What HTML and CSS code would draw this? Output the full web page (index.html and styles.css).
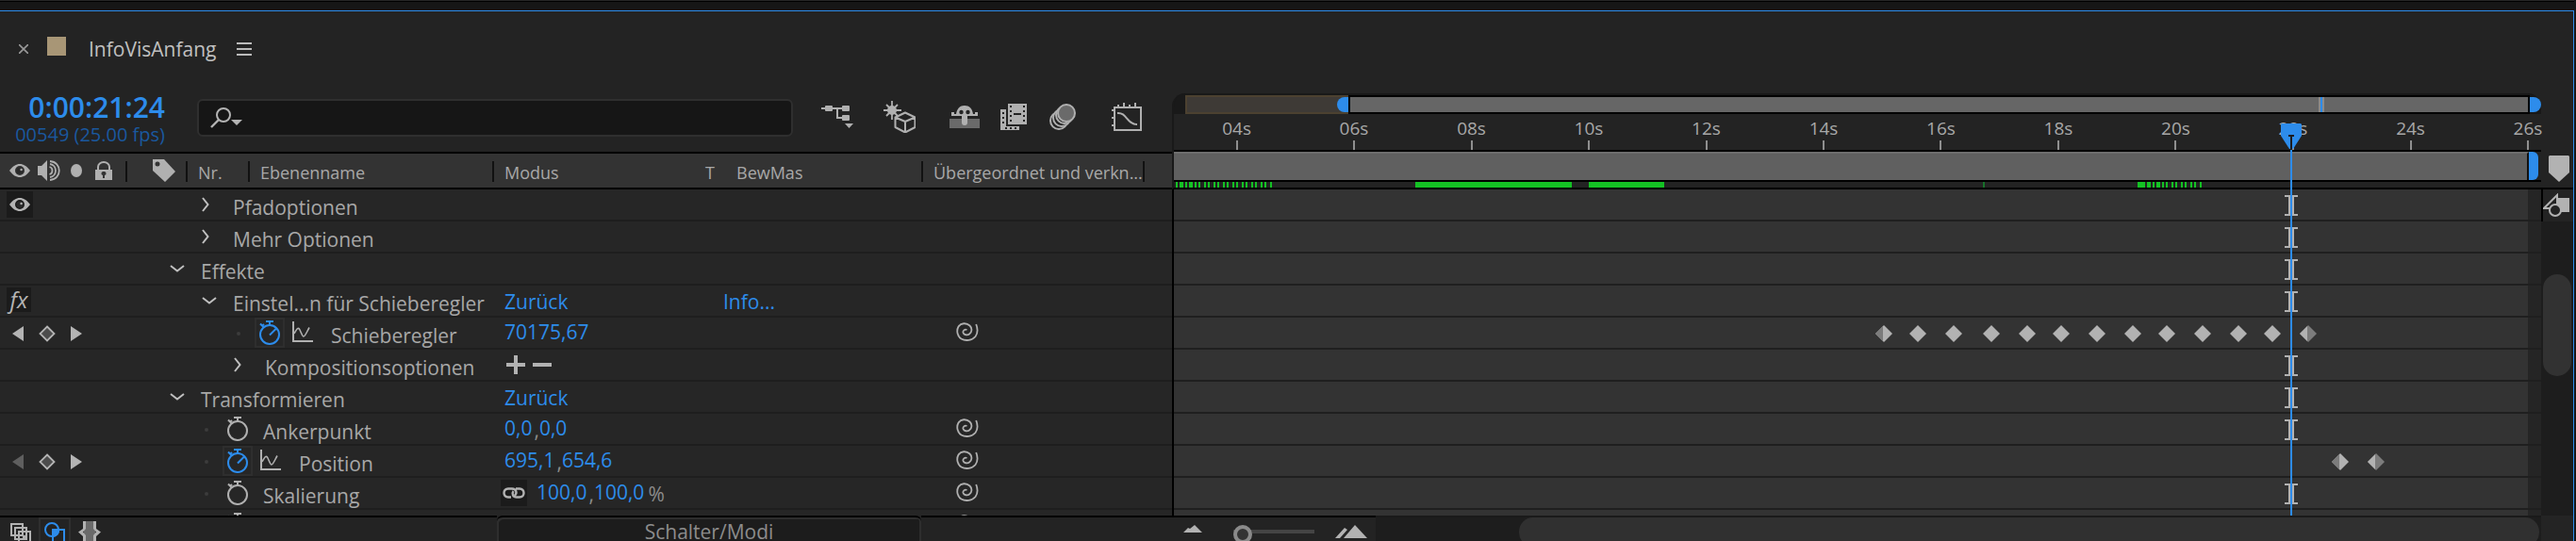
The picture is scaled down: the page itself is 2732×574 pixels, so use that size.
FILE: index.html
```html
<!DOCTYPE html>
<html lang="de">
<head>
<meta charset="utf-8">
<title>InfoVisAnfang</title>
<link rel="stylesheet" href="styles.css">
</head>
<body>
<svg class="defs" aria-hidden="true">
  <symbol id="eye" viewBox="0 0 22 14"><path fill="currentColor" fill-rule="evenodd" d="M0 7C4 2 7 0 11 0s7 2 11 7c-4 5-7 7-11 7S4 12 0 7zm11-5a5 5 0 1 0 0 10 5 5 0 0 0 0-10z"/><circle cx="11" cy="7" r="3.6" fill="#2a2a2a"/><circle cx="12.6" cy="6" r="1.2" fill="currentColor"/></symbol>
  <symbol id="right" viewBox="0 0 8 16"><path d="M1 1l5.5 7L1 15" fill="none" stroke="currentColor" stroke-width="2"/></symbol>
  <symbol id="down" viewBox="0 0 16 8"><path d="M1 1l7 5.5L15 1" fill="none" stroke="currentColor" stroke-width="2"/></symbol>
  <symbol id="watch" viewBox="0 0 22 26"><g fill="none" stroke="currentColor" stroke-width="2"><circle cx="11" cy="15" r="10"/><path d="M7 1h8M11 1v4M1 3.5l4 4M3 6l2-2"/></g></symbol>
  <symbol id="watch-on" viewBox="0 0 22 26"><g fill="none" stroke="currentColor" stroke-width="2"><circle cx="11" cy="15" r="10"/><path d="M7 1h8M11 1v4M1 3.5l4 4M3 6l2-2M11 15.5l7-7"/></g></symbol>
  <symbol id="curve" viewBox="0 0 22 22"><path d="M1 0v21h21" fill="none" stroke="currentColor" stroke-width="2"/><path d="M2 13C5 7 6.500 6 8 9s2.500 7 4 7 3-4 6-9.500" fill="none" stroke="currentColor" stroke-width="1.600"/></symbol>
  <symbol id="whip" viewBox="0 0 24 20"><path d="M11.500 8C9 7 7 9 7.500 11c.8 2.500 4.500 3 6.500 1.500 3-2 3.200-6.500.5-9C11 .2 5 .5 2.500 4.500 0 9 1.500 15 5.500 17.500 10 20 17 19.500 20.500 15c2.500-3.500 2.700-8 .7-13" fill="none" stroke="currentColor" stroke-width="1.800"/></symbol>
  <symbol id="prev" viewBox="0 0 12 16"><path d="M12 0v16L0 8z" fill="currentColor"/></symbol>
  <symbol id="next" viewBox="0 0 12 16"><path d="M0 0v16l12-8z" fill="currentColor"/></symbol>
  <symbol id="key" viewBox="0 0 18 18"><path d="M9 1.500L16.500 9 9 16.500 1.500 9z" fill="#4c4c4c" stroke="currentColor" stroke-width="1.800"/></symbol>
  <symbol id="kf" viewBox="0 0 18 18"><path d="M9 0l9 9-9 9-9-9z" fill="#b2b2b2"/></symbol>
  <symbol id="kf-first" viewBox="0 0 18 18"><path d="M9 0l9 9-9 9-9-9z" fill="#b2b2b2"/><path d="M8 1v16L0 9z" fill="#7c7c7c"/></symbol>
  <symbol id="kf-last" viewBox="0 0 18 18"><path d="M9 0l9 9-9 9-9-9z" fill="#7c7c7c"/><path d="M8 1v16L0 9z" fill="#b2b2b2"/></symbol>
  <symbol id="beam" viewBox="0 0 14 22"><path d="M0 0h14v2h-4v18h4v2H0v-2h4V2H0z" fill="#b2b2b2"/></symbol>
</svg>

<div class="strip"></div>
<main class="panel">
  <nav class="tabs">
    <button class="close" aria-label="Schließen"><svg width="10" height="10" viewBox="0 0 10 10"><path d="M0 0l10 10M10 0L0 10" stroke="#999" stroke-width="1.600"/></svg></button>
    <span class="swatch"></span>
    <span class="tab-name">InfoVisAnfang</span>
    <button class="menu" aria-label="Bedienfeldmenü"><svg width="16" height="14" viewBox="0 0 16 14"><path d="M0 1h16M0 7h16M0 13h16" stroke="#bbb" stroke-width="2"/></svg></button>
  </nav>

  <div class="main">
    <section class="layers">
      <div class="toolbar">
        <div class="clock"><button class="timecode">0:00:21:24</button><span class="frames">00549 (25.00 fps)</span></div>
        <label class="search" aria-label="Suchen">
          <svg width="34" height="24" viewBox="0 0 34 24"><circle cx="14" cy="9" r="7" fill="none" stroke="#b4b4b4" stroke-width="2"/><path d="M9 14l-8 8" stroke="#b4b4b4" stroke-width="2.400"/><path d="M22 14h12l-6 6z" fill="#b4b4b4"/></svg>
          <input type="text">
        </label>
        <div class="tools">
          <button aria-label="Miniatur-Flussdiagramm"><svg width="34" height="26" viewBox="0 0 34 26" fill="#b0b0b0"><path d="M0 3h30v2H0zM16 4h2v9h8v2H16z"/><rect x="4" y="1" width="8" height="6" rx="1"/><rect x="22" y="1" width="8" height="6" rx="1"/><rect x="22" y="11" width="8" height="6" rx="1"/><path d="M25 20h9l-4.500 5z"/></svg></button>
          <button aria-label="3D-Entwurf"><svg width="34" height="34" viewBox="0 0 34 34"><circle cx="9" cy="10" r="5" fill="#b0b0b0"/><path d="M9 0v20M0 10h19M3 4l12 12M15 4L3 16" stroke="#b0b0b0" stroke-width="1.800"/><path d="M12.500 17.500L23 12.500l10.500 5V28L23 33.500 12.500 28zM12.500 17.500L23 22l10.500-4.500M23 22v11" fill="#232323" stroke="#b0b0b0" stroke-width="2" stroke-linejoin="round"/></svg></button>
          <button aria-label="Ebenen ausblenden"><svg width="32" height="26" viewBox="0 0 32 26"><path fill="#6a6a6a" d="M0 15h32v10H0z"/><path fill="#b0b0b0" d="M2 12V8h3v2h2C8 4 11 1 16 1s8 3 9 9h2V8h3v4z"/><path fill="#b0b0b0" d="M13 10h6v9a3 3 0 0 1-6 0z"/><circle cx="12.500" cy="8" r="2.200" fill="#232323"/><circle cx="19.500" cy="8" r="2.200" fill="#232323"/></svg></button>
          <button aria-label="Frameüberblendung"><svg width="28" height="28" viewBox="0 0 28 28"><path fill="#b0b0b0" fill-rule="evenodd" d="M0 6h6v18h14v4H0zM8 0h20v22H8zm6 10v2h8v-2zM10 2v2h2V2zm0 5v2h2V7zm0 5v2h2v-2zm0 5v2h2v-2zM24 2v2h2V2zm0 5v2h2V7zm0 5v2h2v-2zm0 5v2h2v-2zM2 9v2h2V9zm0 5v2h2v-2zm0 5v2h2v-2zm3 6v2h2v-2zm5 0v2h2v-2zm5 0v2h2v-2z"/></svg></button>
          <button aria-label="Bewegungsunschärfe"><svg width="28" height="28" viewBox="0 0 28 28" fill="#232323" stroke="#b0b0b0" stroke-width="2"><circle cx="10" cy="18" r="9"/><circle cx="13" cy="15" r="9"/><circle cx="16" cy="12" r="9"/><circle cx="18" cy="10" r="9" fill="#6a6a6a"/></svg></button>
          <button aria-label="Diagrammeditor"><svg width="32" height="30" viewBox="0 0 32 30" fill="none" stroke="#b0b0b0" stroke-width="2"><path d="M3 5h28v24H3zM7 4V2M13 4V0M19 4V2M25 4V0M2 8H0M2 16H0M2 24H0M6 11c10-1 10 12 21 12"/></svg></button>
        </div>
      </div>

      <div class="row head">
        <div class="av">
          <svg class="h-eye" width="22" height="14"><use href="#eye"/></svg>
          <svg width="24" height="22" viewBox="0 0 24 22"><path d="M0 6h4l6-6v22l-6-6H0z" fill="#b0b0b0"/><path d="M12.500 7c4 1 4 7 0 8M13 4c8 1 8 13 0 14M13 1c13 1 13 19 0 20" fill="none" stroke="#b0b0b0" stroke-width="1.800"/></svg>
          <span class="solo"></span>
          <svg width="18" height="20" viewBox="0 0 18 20"><path d="M3 10V6a6 5 0 0 1 12 0v4" fill="none" stroke="#b0b0b0" stroke-width="2"/><path d="M0 9h18v11H0z" fill="#b0b0b0"/><path d="M9 11a2 2 0 0 1 1 4v3H8v-3a2 2 0 0 1 1-4z" fill="#333"/></svg>
        </div>
        <div class="tag"><svg width="24" height="24" viewBox="0 0 24 24"><path fill="#b0b0b0" fill-rule="evenodd" d="M0 0h12l12 13-11 11L0 12zm5 2.500a2.500 2.500 0 1 0 0 5 2.500 2.500 0 0 0 0-5z"/></svg></div>
        <div class="nr">Nr.</div>
        <div class="ename">Ebenenname</div>
        <div class="mode"><span class="m1">Modus</span><span class="m2">T</span><span>BewMas</span></div>
        <div class="parent">Übergeordnet und verkn...</div>
      </div>

      <div class="rows">
        <div class="row"><div class="av"><button class="box"><svg width="22" height="14"><use href="#eye"/></svg></button></div><div class="name l2"><button class="twirl"><svg width="8" height="16"><use href="#right"/></svg></button><span>Pfadoptionen</span></div></div>
        <div class="row"><div class="av"></div><div class="name l2"><button class="twirl"><svg width="8" height="16"><use href="#right"/></svg></button><span>Mehr Optionen</span></div></div>
        <div class="row"><div class="av"></div><div class="name l1"><button class="twirl"><svg width="16" height="8"><use href="#down"/></svg></button><span>Effekte</span></div></div>
        <div class="row"><div class="av"><button class="box fx">fx</button></div><div class="name l2"><button class="twirl"><svg width="16" height="8"><use href="#down"/></svg></button><span>Einstel...n für Schieberegler</span></div><div class="value"><button class="reset">Zurück</button><button class="info">Info...</button></div></div>
        <div class="row"><div class="av keys"><button><svg width="12" height="16"><use href="#prev"/></svg></button><button><svg width="18" height="18"><use href="#key"/></svg></button><button><svg width="12" height="16"><use href="#next"/></svg></button></div><div class="name l3"><i class="dot"></i><button class="watch on"><svg width="22" height="26"><use href="#watch-on"/></svg></button><button class="graph"><svg width="22" height="22"><use href="#curve"/></svg></button><span>Schieberegler</span></div><div class="value"><button>70175,67</button></div><button class="whip"><svg width="24" height="20"><use href="#whip"/></svg></button></div>
        <div class="row"><div class="av"></div><div class="name l3"><button class="twirl"><svg width="8" height="16"><use href="#right"/></svg></button><span>Kompositionsoptionen</span></div><div class="value plus"><button aria-label="Hinzufügen"><svg width="20" height="20" viewBox="0 0 20 20"><path d="M0 10h20M10 0v20" stroke="#b2b2b2" stroke-width="4"/></svg></button><button aria-label="Entfernen"><svg width="20" height="20" viewBox="0 0 20 20"><path d="M0 10h20" stroke="#b2b2b2" stroke-width="4"/></svg></button></div></div>
        <div class="row"><div class="av"></div><div class="name l1"><button class="twirl"><svg width="16" height="8"><use href="#down"/></svg></button><span>Transformieren</span></div><div class="value"><button class="reset">Zurück</button></div></div>
        <div class="row"><div class="av"></div><div class="name l2"><i class="dot"></i><button class="watch"><svg width="22" height="26"><use href="#watch"/></svg></button><span>Ankerpunkt</span></div><div class="value"><button>0,0</button><span class="sep">,</span><button>0,0</button></div><button class="whip"><svg width="24" height="20"><use href="#whip"/></svg></button></div>
        <div class="row"><div class="av keys"><button class="off"><svg width="12" height="16"><use href="#prev"/></svg></button><button><svg width="18" height="18"><use href="#key"/></svg></button><button><svg width="12" height="16"><use href="#next"/></svg></button></div><div class="name l2"><i class="dot"></i><button class="watch on"><svg width="22" height="26"><use href="#watch-on"/></svg></button><button class="graph"><svg width="22" height="22"><use href="#curve"/></svg></button><span>Position</span></div><div class="value"><button>695,1</button><span class="sep">,</span><button>654,6</button></div><button class="whip"><svg width="24" height="20"><use href="#whip"/></svg></button></div>
        <div class="row"><div class="av"></div><div class="name l2"><i class="dot"></i><button class="watch"><svg width="22" height="26"><use href="#watch"/></svg></button><span>Skalierung</span></div><div class="value linked"><button class="box" aria-label="Proportionen beibehalten"><svg width="24" height="12" viewBox="0 0 24 12" fill="none" stroke="#b2b2b2" stroke-width="2.400"><path d="M9 10.500H6C0 10.500 0 1.500 6 1.500h4c5 0 5.500 5 3 7M15 10.500h3c6 0 6-9 0-9h-4M11.500 4c-2 3-.5 6.500 3.500 6.500"/></svg></button><button>100,0</button><span class="sep">,</span><button>100,0</button><span class="pct">%</span></div><button class="whip"><svg width="24" height="20"><use href="#whip"/></svg></button></div>
        <div class="row"><div class="av"></div><div class="name l2"><i class="dot"></i><button class="watch"><svg width="22" height="26"><use href="#watch"/></svg></button></div><div class="value"></div><button class="whip"><svg width="24" height="20"><use href="#whip"/></svg></button></div>
      </div>
    </section>

    <section class="timeline">
      <div class="ruler">
        <div class="navigator"><span class="before"><i></i></span><span class="range"></span><i class="end"></i><i class="here" style="left:83.930%"></i></div>
        <div class="scale">
          <span class="tick" style="left:4.660%">04s</span>
          <span class="tick" style="left:13.240%">06s</span>
          <span class="tick" style="left:21.830%">08s</span>
          <span class="tick" style="left:30.410%">10s</span>
          <span class="tick" style="left:39%">12s</span>
          <span class="tick" style="left:47.590%">14s</span>
          <span class="tick" style="left:56.170%">16s</span>
          <span class="tick" style="left:64.760%">18s</span>
          <span class="tick" style="left:73.340%">20s</span>
          <span class="tick" style="left:81.930%">22s</span>
          <span class="tick" style="left:90.520%">24s</span>
          <span class="tick" style="left:99.100%">26s</span>
        </div>
        <div class="work"><span class="area"></span><i></i></div>
        <svg class="cache" viewBox="0 0 1450 6" preserveAspectRatio="none"><path fill="#14c224" d="M2 0h2v6h-2zM6 0h4v6h-4zM12 0h2v6h-2zM16 0h4v6h-4zM22 0h2v6h-2zM26 0h2v6h-2zM32 0h2v6h-2zM36 0h2v6h-2zM42 0h2v6h-2zM46 0h2v6h-2zM52 0h2v6h-2zM56 0h2v6h-2zM62 0h2v6h-2zM66 0h2v6h-2zM72 0h2v6h-2zM76 0h2v6h-2zM82 0h2v6h-2zM86 0h2v6h-2zM92 0h2v6h-2zM96 0h2v6h-2zM102 0h2v6h-2zM256 0h166v6h-166zM440 0h80v6h-80zM1022 0h8v6h-8zM1032 0h4v6h-4zM1038 0h2v6h-2zM1042 0h4v6h-4zM1048 0h2v6h-2zM1052 0h2v6h-2zM1058 0h2v6h-2zM1062 0h2v6h-2zM1068 0h2v6h-2zM1072 0h2v6h-2zM1078 0h2v6h-2zM1082 0h2v6h-2zM1088 0h2v6h-2z"/><path fill="#17702a" d="M858 0h2v6h-2z"/></svg>
      </div>
      <div class="tracks">
        <div class="track"><svg class="beam" style="left:81.720%"><use href="#beam"/></svg></div>
        <div class="track"><svg class="beam" style="left:81.720%"><use href="#beam"/></svg></div>
        <div class="track"><svg class="beam" style="left:81.720%"><use href="#beam"/></svg></div>
        <div class="track"><svg class="beam" style="left:81.720%"><use href="#beam"/></svg></div>
        <div class="track">
          <svg class="kf" style="left:51.930%"><use href="#kf-first"/></svg>
          <svg class="kf" style="left:54.410%"><use href="#kf"/></svg>
          <svg class="kf" style="left:57.030%"><use href="#kf"/></svg>
          <svg class="kf" style="left:59.790%"><use href="#kf"/></svg>
          <svg class="kf" style="left:62.410%"><use href="#kf"/></svg>
          <svg class="kf" style="left:64.900%"><use href="#kf"/></svg>
          <svg class="kf" style="left:67.520%"><use href="#kf"/></svg>
          <svg class="kf" style="left:70.140%"><use href="#kf"/></svg>
          <svg class="kf" style="left:72.620%"><use href="#kf"/></svg>
          <svg class="kf" style="left:75.240%"><use href="#kf"/></svg>
          <svg class="kf" style="left:77.860%"><use href="#kf"/></svg>
          <svg class="kf" style="left:80.340%"><use href="#kf"/></svg>
          <svg class="kf" style="left:82.970%"><use href="#kf-last"/></svg>
        </div>
        <div class="track"><svg class="beam" style="left:81.720%"><use href="#beam"/></svg></div>
        <div class="track"><svg class="beam" style="left:81.720%"><use href="#beam"/></svg></div>
        <div class="track"><svg class="beam" style="left:81.720%"><use href="#beam"/></svg></div>
        <div class="track">
          <svg class="kf" style="left:85.310%"><use href="#kf-first"/></svg>
          <svg class="kf" style="left:87.930%"><use href="#kf-last"/></svg>
        </div>
        <div class="track"><svg class="beam" style="left:81.720%"><use href="#beam"/></svg></div>
        <div class="track"></div>
      </div>
      <div class="overlay"><div class="playhead" style="left:81.720%"><svg width="22" height="28" viewBox="0 0 22 28"><path d="M1 0h20l1 1v12L13 27H9L0 13V1z" fill="#2d8ceb"/><path d="M8 13h6M11 13v15" stroke="#1c1c1c" stroke-width="2"/></svg></div></div>
    </section>

    <aside class="rail">
      <button class="marker" aria-label="Marke"><svg width="22" height="28" viewBox="0 0 22 28"><path d="M1 0h20l1 1v17L11 28 0 18V1z" fill="#b2b2b2"/></svg></button>
      <button class="comp" aria-label="Kompositionsfamilie"><svg width="28" height="26" viewBox="0 0 28 26"><path d="M14 5h14v15H14z" fill="#b2b2b2"/><path d="M15 2L1 16h14z" fill="#232323" stroke="#b2b2b2" stroke-width="2"/><circle cx="13" cy="18" r="6" fill="#232323" stroke="#b2b2b2" stroke-width="2"/></svg></button>
      <div class="vscroll"><i></i></div>
    </aside>
  </div>

  <footer class="foot">
    <div class="switches">
      <button aria-label="Ebenenschalter"><svg width="22" height="22" viewBox="0 0 22 22" fill="#232323" stroke="#b2b2b2" stroke-width="2"><path d="M1 1h12v12H1zM5 5h12v12H5zM9 9h12v12H9z"/><circle cx="15" cy="15" r="1.200" fill="#b2b2b2"/></svg></button>
      <button class="active" aria-label="Modi"><svg width="22" height="22" viewBox="0 0 22 22"><path d="M9 8h7a7 7 0 0 1-7 8z" fill="#2d8ceb"/><g fill="none" stroke="#2d8ceb" stroke-width="2"><circle cx="8" cy="8" r="7"/><path d="M9 8h12v13H9z"/></g></svg></button>
      <button aria-label="In/Out"><svg width="24" height="24" viewBox="0 0 24 24"><path d="M6 0h12v24H6z" fill="#6a6a6a"/><path d="M5 0h3v8l-3 3.500L8 15v9H5v-8l-5-4.500L5 8zM19 0h-3v8l3 3.500-3 3.500v9h3v-8l5-4.500L19 8z" fill="#b2b2b2"/></svg></button>
    </div>
    <button class="toggle">Schalter/Modi</button>
    <div class="zoom">
      <svg width="20" height="8" viewBox="0 0 20 8"><path d="M0 8l5-5 2 1 5-4 8 8z" fill="#b2b2b2"/></svg>
      <input type="range" min="0" max="100" value="0" aria-label="Zoom">
      <svg width="34" height="14" viewBox="0 0 34 14"><path d="M9 14L21 0l13 14zM0 14L10 3l3 2-8 9z" fill="#b2b2b2"/></svg>
    </div>
    <div class="hscroll"><i></i></div>
    <div class="corner"></div>
  </footer>
</main>
</body>
</html>
```
FILE: styles.css
```css
* { box-sizing: border-box; }
body {
  margin: 0;
  padding-right: 2px;
  height: 100vh;
  overflow: hidden;
  display: flex;
  flex-direction: column;
  background: #161616;
  color: #a8a8a8;
  font: 21px/32px "Open Sans", "Noto Sans", sans-serif;
}
button {
  background: none;
  border: 0;
  padding: 0;
  margin: 0;
  font: inherit;
  color: inherit;
}
svg { display: block; flex: none; }
.defs { position: absolute; width: 0; height: 0; }
.strip { height: 11px; flex: none; border-top: 1px solid #262626; box-shadow: inset 0 1px #000; }
.panel {
  flex: 1;
  min-height: 0;
  display: flex;
  flex-direction: column;
  background: #232323;
  border-top: 1px solid #2d8ceb;
  border-right: 1px solid #2d8ceb;
}

.tabs {
  height: 85px;
  flex: none;
  display: flex;
  align-items: flex-start;
  padding: 27px 20px 0;
}
.close { padding-top: 8px; }
.swatch { width: 20px; height: 20px; margin: 0 24px 0 20px; background: #a89676; }
.tab-name { color: #c0c0c0; line-height: 26px; }
.menu { margin-left: 22px; padding-top: 6px; }

.main { flex: 1; min-height: 0; display: flex; }
.layers { flex: none; width: 1243px; display: flex; flex-direction: column; }
.toolbar { height: 66px; flex: none; display: flex; border-bottom: 2px solid #000; }
.clock { width: 175px; display: flex; flex-direction: column; align-items: flex-end; }
.timecode { color: #2d8ceb; font-size: 30px; font-weight: 600; line-height: 34px; }
.frames { color: #1a589f; font-size: 20px; line-height: 24px; white-space: nowrap; }
.search {
  width: 632px;
  height: 40px;
  margin: 8px 30px 0 34px;
  display: flex;
  align-items: flex-start;
  padding: 6px 12px;
  background: #161616;
  border: 2px solid #2f2f2f;
  border-radius: 6px;
}
.search input { flex: 1; min-width: 0; height: 24px; background: none; border: 0; outline: 0; color: #ccc; }
.tools { flex: 1; display: flex; align-items: center; height: 54px; }
.tools button:nth-child(2) { margin-left: 32px; }
.tools button:nth-child(3) { margin-left: 36px; }
.tools button:nth-child(4) { margin-left: 22px; }
.tools button:nth-child(5) { margin-left: 24px; }
.tools button:nth-child(6) { margin-left: 38px; }

.row { display: flex; height: 34px; flex: none; border-bottom: 2px solid #1e1e1e; }
.head { height: 38px; background: #333; border-color: #000; font-size: 18px; line-height: 40px; white-space: nowrap; }
.head > div { position: relative; }
.head > div::after {
  content: "";
  position: absolute;
  right: 0;
  top: 8px;
  width: 2px;
  height: 22px;
  background: #111;
}
.head .av { width: 135px; display: flex; align-items: center; padding: 0 16px 0 10px; gap: 8px; color: #b0b0b0; }
.solo { width: 14px; height: 14px; margin: 0 6px 0 3px; border-radius: 50%; background: #b0b0b0; }
.tag { width: 64px; padding: 6px 0 0 27px; }
.nr { width: 66px; padding-left: 11px; }
.ename { width: 259px; padding-left: 11px; }
.mode { width: 455px; padding-left: 11px; display: flex; }
.m1 { width: 213px; }
.m2 { width: 33px; }
.parent { width: 234px; padding-left: 11px; }
.head .parent::after { right: -1px; }

.rows { flex: 1; min-height: 0; overflow: hidden; background: #262626; }
.av { width: 135px; flex: none; padding-left: 7px; color: #b4b4b4; }
.box { width: 28px; height: 28px; margin-top: 2px; display: flex; align-items: center; justify-content: center; background: #1b1b1b; }
.fx { font-style: italic; font-size: 24px; line-height: 24px; width: 26px; height: 26px; }
.keys { display: flex; align-items: center; padding-left: 13px; height: 34px; }
.keys button:nth-child(2) { margin: 0 16px; }
.off { opacity: .4; }
.name { width: 391px; flex: none; display: flex; align-items: flex-start; line-height: 38px; white-space: nowrap; }
.l1 { padding-left: 45px; }
.l2 { padding-left: 79px; }
.l3 { padding-left: 113px; }
.twirl { width: 33px; height: 32px; display: flex; align-items: center; flex: none; color: #c0c0c0; }
.dot { width: 4px; height: 4px; margin: 15px 15px 0 3px; border-radius: 50%; background: #3c3c3c; }
.watch { width: 32px; height: 32px; display: flex; align-items: center; justify-content: center; color: #b0b0b0; margin-right: 11px; }
.on { color: #2d8ceb; border: 2px solid #2e2e2e; margin-right: 8px; }
.graph { margin-right: 19px; padding-top: 4px; color: #b0b0b0; }
.value { width: 453px; flex: none; display: flex; align-items: flex-start; padding-left: 9px; color: #2d8ceb; line-height: 30px; }
.reset { width: 232px; flex: none; text-align: left; line-height: 34px; }
.info { line-height: 34px; }
.sep { color: #8c8c8c; margin-left: 2px; line-height: 34px; }
.pct { color: #8c8c8c; margin-left: 4px; line-height: 34px; }
.plus { gap: 8px; padding: 6px 0 0 11px; }
.linked { padding-left: 5px; }
.linked .box { margin-right: 10px; }
.whip { margin-left: 35px; padding-top: 5px; height: 25px; color: #b0b0b0; }

.timeline { flex: 1; min-width: 0; position: relative; display: flex; flex-direction: column; padding-top: 2px; }
.ruler {
  height: 102px;
  flex: none;
  padding-top: 2px;
  border-left: 2px solid #191919;
  border-bottom: 2px solid #000;
  border-radius: 14px 14px 0 0;
  background: #191919;
}
.navigator { height: 20px; display: flex; position: relative; padding-left: 12px; }
.before { width: 12%; flex: none; border: 2px solid #4c4130; border-right: 0; background: #3e3a36; display: flex; justify-content: flex-end; }
.before i { width: 12px; background: #2d8ceb; border-radius: 8px 0 0 8px; }
.range { flex: 1; border: 2px solid #000; background: #666; }
.end { width: 12px; margin: 2px 0; background: #2d8ceb; border-radius: 0 8px 8px 0; }
.here { position: absolute; top: 2px; bottom: 2px; width: 6px; margin-left: -3px; background: #2d8ceb; border: 2px solid #8a8a8a; border-width: 0 2px; }
.scale { height: 40px; position: relative; background: #232323; border-bottom: 2px solid #000; }
.tick { position: absolute; top: 3px; width: 40px; margin-left: -21px; font-size: 19px; line-height: 25px; display: flex; flex-direction: column; align-items: center; }
.tick::after { content: ""; width: 2px; height: 10px; background: #8f8f8f; }
.work { height: 32px; display: flex; background: #232323; border-bottom: 2px solid #000; }
.area { width: 99.1%; background: #606060; border-top: 2px solid #6e6e6e; border-right: 2px solid #111; }
.work i { width: 10px; background: #2d8ceb; border-radius: 0 6px 6px 0; }
.cache { width: 100%; height: 6px; background: #232323; }
.tracks { flex: 1; min-height: 0; overflow: hidden; border-left: 2px solid #000; background: linear-gradient(90deg, #333 99.03%, #252525 99.03%); }
.track { height: 34px; position: relative; border-bottom: 2px solid #1f1f1f; }
.beam { position: absolute; top: 6px; width: 14px; height: 22px; margin-left: -7px; }
.kf { position: absolute; top: 8px; width: 18px; height: 18px; margin-left: -9px; }
.overlay { position: absolute; inset: 34px 0 0 2px; pointer-events: none; }
.playhead { position: absolute; top: 0; bottom: 0; width: 22px; margin-left: -11px; }
.playhead::after { content: ""; position: absolute; top: 28px; bottom: 0; left: 10px; width: 2px; background: #2d8ceb; }

.rail { width: 34px; flex: none; display: flex; flex-direction: column; }
.marker { height: 104px; padding: 68px 0 0 8px; border-bottom: 2px solid #000; display: flex; align-items: flex-start; }
.comp { height: 34px; padding-top: 4px; border-left: 2px solid #000; display: flex; align-items: flex-start; }
.vscroll { flex: 1; padding: 56px 2px 0; background: #1d1d1d; }
.vscroll i { display: block; height: 108px; border-radius: 15px; background: #323232; }

.foot { height: 27px; flex: none; display: flex; overflow: hidden; }
.switches, .toggle, .zoom { border-top: 2px solid #000; flex: none; }
.switches { width: 527px; display: flex; align-items: flex-start; padding-left: 11px; }
.switches button { padding-top: 6px; display: flex; align-items: flex-start; }
.switches .active { width: 34px; height: 34px; margin: 0 8px; padding: 3px 4px 0; border: 2px solid #2f2f2f; }
.switches button:last-child { padding-top: 4px; }
.toggle { width: 450px; height: 27px; display: flex; align-items: flex-start; justify-content: center; line-height: 30px; background: #1c1c1c; color: #8c8c8c; border-radius: 6px 6px 0 0; box-shadow: inset 2px 2px #2e2e2e, inset -2px 0 #2e2e2e; }
.zoom { width: 482px; display: flex; align-items: flex-start; padding: 8px 8px 0 278px; }
.zoom input { appearance: none; align-self: flex-start; width: 86px; height: 20px; margin: 0 22px 0 33px; background: none; }
.zoom input::-webkit-slider-runnable-track { height: 4px; margin-top: -6px; background: #444; }
.zoom input::-webkit-slider-thumb { appearance: none; width: 20px; height: 20px; margin-top: -5px; border: 4px solid #8a8a8a; border-radius: 50%; background: #333; }
.hscroll { flex: 1; border-top: 2px solid #1a1a1a; background: #1d1d1d; padding: 0 2px 0 152px; }
.hscroll i { display: block; height: 31px; border-radius: 15px; background: #303030; }
.corner { width: 34px; flex: none; background: #242424; }
```
